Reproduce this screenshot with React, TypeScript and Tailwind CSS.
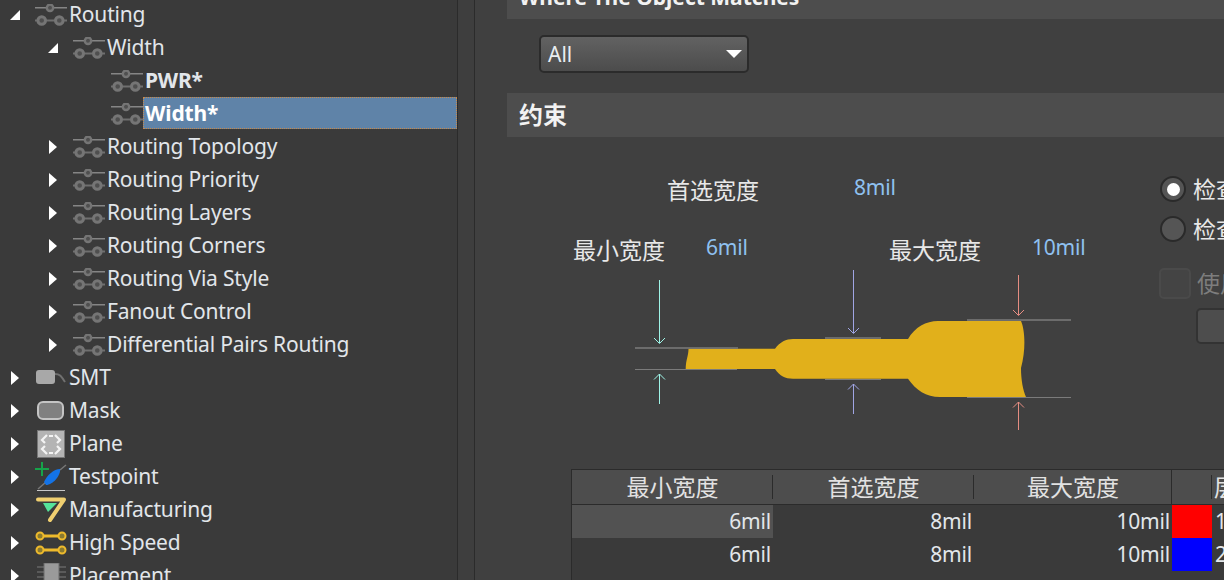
import React from "react";

const FONT = "font-['Noto_Sans','Noto_Sans_CJK_SC',sans-serif]";

const RuleIcon = () => (
  <svg width="32" height="22" viewBox="0 1 32 22" fill="none" stroke="#757575" strokeWidth="1.5">
    <path d="M0 4.800H12M18 4.800H32" stroke="#858585" />
    <path d="M0 17.500H4M10 17.500H21M28 17.500H32" stroke="#6f6f6f" strokeWidth="2" />
    <circle cx="15" cy="4.800" r="3.200" strokeWidth="2.400" fill="#4f4f4f" />
    <circle cx="6.700" cy="17.500" r="3.800" strokeWidth="3" fill="#4f4f4f" />
    <circle cx="24.300" cy="17.500" r="3.800" strokeWidth="3" fill="#4f4f4f" />
  </svg>
);

const SmtIcon = () => (
  <svg width="32" height="22" viewBox="0 0 32 22" fill="none">
    <rect x="1" y="3" width="19" height="14" rx="3" fill="#a8a8a8" />
    <path d="M20 7C25 7 26 9 30 15" stroke="#707070" strokeWidth="2" />
  </svg>
);

const MaskIcon = () => (
  <svg width="32" height="22" viewBox="0 0 32 22" fill="none">
    <rect x="3" y="2" width="25" height="17" rx="5" fill="#808080" stroke="#c4c4c4" strokeWidth="2" />
  </svg>
);

const PlaneIcon = () => (
  <svg width="32" height="28" viewBox="0 0 32 28" fill="none">
    <rect x="2.5" y="0.500" width="27" height="27" fill="#b4b4b4" stroke="#777" />
    <path
      d="M12 5L7 10L10 13M20 5L25 10L22 13M10 16L7 19L12 24M22 16L25 19L20 24M14 6H18M14 23H18"
      stroke="#f4f4f4"
      strokeWidth="2.2"
    />
  </svg>
);

const TestpointIcon = () => (
  <svg width="32" height="30" viewBox="0 0 32 30" fill="none">
    <path d="M0 7H14M7 0V14" stroke="#16a34a" strokeWidth="2" />
    <path d="M2 28.500H30" stroke="#c8c8c8" />
    <path d="M3 27L11 20M25 8L31 3" stroke="#777" strokeWidth="1.5" />
    <path d="M9 20C12 13 19 7 25 7C26 13 18 23 11 23Z" fill="#1473e6" />
  </svg>
);

const ManufacturingIcon = () => (
  <svg width="32" height="28" viewBox="0 0 32 28" fill="none">
    <path d="M8 7H22L13 16Z" fill="#55e39a" />
    <path d="M3 3.500H29L15 24" stroke="#f0cf70" strokeWidth="4" strokeLinejoin="round" strokeLinecap="round" />
  </svg>
);

const HighSpeedIcon = () => (
  <svg width="32" height="26" viewBox="0 0 32 26" fill="none" stroke="#eeba2c" strokeWidth="2">
    <path d="M8 6H24M8 20H24" strokeWidth="3" />
    <circle cx="5" cy="6" r="3.5" fill="#8a7a30" />
    <circle cx="27" cy="6" r="3.5" fill="#8a7a30" />
    <circle cx="5" cy="20" r="3.5" fill="#8a7a30" />
    <circle cx="27" cy="20" r="3.5" fill="#8a7a30" />
  </svg>
);

const PlacementIcon = () => (
  <svg width="32" height="26" viewBox="0 0 32 26" fill="none">
    <rect x="9" y="0" width="15" height="26" fill="#9a9a9a" stroke="#6a6a6a" />
    <path d="M2 4H9M2 9H9M2 14H9M2 19H9M24 4H31M24 9H31M24 14H31M24 19H31" stroke="#7a7a7a" />
  </svg>
);

type Row = {
  label: string;
  level: number;
  arrow?: "open" | "closed";
  icon: React.ReactNode;
  bold?: boolean;
  selected?: boolean;
};

const rows: Row[] = [
  { label: "Routing", level: 0, arrow: "open", icon: <RuleIcon /> },
  { label: "Width", level: 1, arrow: "open", icon: <RuleIcon /> },
  { label: "PWR*", level: 2, icon: <RuleIcon />, bold: true },
  { label: "Width*", level: 2, icon: <RuleIcon />, bold: true, selected: true },
  { label: "Routing Topology", level: 1, arrow: "closed", icon: <RuleIcon /> },
  { label: "Routing Priority", level: 1, arrow: "closed", icon: <RuleIcon /> },
  { label: "Routing Layers", level: 1, arrow: "closed", icon: <RuleIcon /> },
  { label: "Routing Corners", level: 1, arrow: "closed", icon: <RuleIcon /> },
  { label: "Routing Via Style", level: 1, arrow: "closed", icon: <RuleIcon /> },
  { label: "Fanout Control", level: 1, arrow: "closed", icon: <RuleIcon /> },
  { label: "Differential Pairs Routing", level: 1, arrow: "closed", icon: <RuleIcon /> },
  { label: "SMT", level: 0, arrow: "closed", icon: <SmtIcon /> },
  { label: "Mask", level: 0, arrow: "closed", icon: <MaskIcon /> },
  { label: "Plane", level: 0, arrow: "closed", icon: <PlaneIcon /> },
  { label: "Testpoint", level: 0, arrow: "closed", icon: <TestpointIcon /> },
  { label: "Manufacturing", level: 0, arrow: "closed", icon: <ManufacturingIcon /> },
  { label: "High Speed", level: 0, arrow: "closed", icon: <HighSpeedIcon /> },
  { label: "Placement", level: 0, arrow: "closed", icon: <PlacementIcon /> },
];

const levelPad: Record<number, string> = { 0: "pl-0", 1: "pl-[38px]", 2: "pl-[76px]" };

const Arrow = ({ kind }: { kind?: "open" | "closed" }) => (
  <span className="flex w-[35px] shrink-0 justify-center pr-[5px]">
    {kind === "open" && (
      <svg width="10" height="10" viewBox="0 0 10 10">
        <path d="M0 10H10V0Z" fill="#fff" />
      </svg>
    )}
    {kind === "closed" && (
      <svg width="8" height="14" viewBox="0 0 8 14">
        <path d="M0 0L8 7L0 14Z" fill="#fff" />
      </svg>
    )}
  </span>
);

const TreeRow = ({ row }: { row: Row }) => (
  <div className={`flex h-[33px] shrink-0 items-center ${levelPad[row.level]}`}>
    <Arrow kind={row.arrow} />
    <span className="flex w-[32px] shrink-0 justify-center">{row.icon}</span>
    {row.selected ? (
      <span className="mb-[1px] flex h-[32px] flex-1 items-center border border-dotted border-[#c98a4a] bg-[#5f83a8] pl-[1px] text-[21px] leading-none font-bold tracking-[-0.1px] text-white">
        {row.label}
      </span>
    ) : (
      <span
        className={`mb-[1px] ml-[2px] text-[21px] leading-none tracking-[-0.2px] whitespace-nowrap text-[#e2e6ea] ${row.bold ? "font-bold" : ""}`}
      >
        {row.label}
      </span>
    )}
  </div>
);

const TreePanel = () => (
  <div className="flex h-full w-[457px] shrink-0 flex-col overflow-hidden bg-[#3a3a3a]">
    <div className="-mt-[2px] flex flex-col">
      {rows.map((row) => (
        <TreeRow key={row.label} row={row} />
      ))}
    </div>
  </div>
);

const SectionBar = ({ title, className }: { title: string; className?: string }) => (
  <div
    className={`flex h-[44px] shrink-0 items-center bg-[#4d4d4d] pl-[12px] leading-none font-bold whitespace-nowrap text-[#f2f2f2] ${className ?? ""}`}
  >
    {title}
  </div>
);

const WidthDrawing = () => (
  <svg width="470" height="180" viewBox="620 260 470 180" fill="none" className="block">
    <path
      d="M688.5 348.7H775C780 342 786 339 793 339H908C915 327 926 321 938 321H1021C1025 330 1026 350 1021 368C1021 380 1023 390 1026 397H940C926 397 916 390 908 378.7H793C785 378.7 780 376 775 369H685.7C685.7 360 688.5 356 688.5 348.7Z"
      fill="#e1b01b"
    />
    <g stroke="#7b7b7b">
      <path d="M635 348H738" strokeWidth="1.5" />
      <path d="M635 369.5H737" />
      <path d="M825 338H881" strokeWidth="1.5" />
      <path d="M825 379.5H881" />
      <path d="M967 320H1071" strokeWidth="1.5" />
      <path d="M967 397.5H1071" />
    </g>
    <g stroke="#9ff5e8">
      <path d="M659.5 280V343M654 338L659.5 343.5L665 338" />
      <path d="M659.5 404V374M654 379.5L659.5 374L665 379.5" />
    </g>
    <g stroke="#a0a5e4">
      <path d="M853.5 270V333M848 328L853.5 333.5L859 328" />
      <path d="M853.5 414V384M848 389.5L853.5 384L859 389.5" />
    </g>
    <g stroke="#e58d82">
      <path d="M1018.5 275V315M1013 310L1018.5 315.500L1024 310" />
      <path d="M1018.5 430V402M1013 407.500L1018.5 402L1024 407.500" />
    </g>
  </svg>
);

const Diagram = () => (
  <div className="flex w-[653px] shrink-0 flex-col">
    <div className="mt-[38px] flex h-[30px] items-center pl-[160px] whitespace-nowrap">
      <span className="w-[187px] text-[23px] leading-none text-[#e8e8e8]">首选宽度</span>
      <span className="-mt-[5px] text-[21px] leading-none tracking-[-0.2px] text-[#8fc1f0]">8mil</span>
    </div>
    <div className="mt-[30px] flex h-[30px] items-center pl-[66px] whitespace-nowrap">
      <span className="w-[133px] text-[23px] leading-none text-[#e8e8e8]">最小宽度</span>
      <span className="-mt-[5px] w-[183px] text-[21px] leading-none tracking-[-0.2px] text-[#8fc1f0]">6mil</span>
      <span className="w-[143px] text-[23px] leading-none text-[#e8e8e8]">最大宽度</span>
      <span className="-mt-[5px] text-[21px] leading-none tracking-[-0.2px] text-[#8fc1f0]">10mil</span>
    </div>
    <div className="-mt-[5px] ml-[113px]">
      <WidthDrawing />
    </div>
  </div>
);

const Options = () => (
  <div className="flex flex-1 flex-col pt-[32px] whitespace-nowrap">
    <div className="flex h-[40px] items-center">
      <span className="flex h-[26px] w-[26px] items-center justify-center rounded-full border-2 border-[#2a2a2a] bg-[#555]">
        <span className="h-[13px] w-[13px] rounded-full bg-white" />
      </span>
      <span className="ml-[7px] text-[23px] leading-none text-[#e8e8e8]">检查</span>
    </div>
    <div className="flex h-[40px] items-center">
      <span className="h-[26px] w-[26px] rounded-full border-2 border-[#2a2a2a] bg-[#555]" />
      <span className="ml-[7px] text-[23px] leading-none text-[#e8e8e8]">检查</span>
    </div>
    <div className="mt-[18px] -ml-[1px] flex h-[32px] items-center">
      <span className="h-[31px] w-[32px] rounded-[5px] border-2 border-[#4a4a4a] bg-[#444]" />
      <span className="ml-[6px] text-[23px] leading-none text-[#7d7d7d]">使用</span>
    </div>
    <div className="mt-[9px] ml-[36px] h-[36px] w-[120px] rounded-[5px] border-2 border-[#333] bg-[#4d4d4d]" />
  </div>
);

const cols = "grid grid-cols-[201px_201px_198px_40px_1fr]";

const HeaderCell = ({ text, full }: { text: string; full?: boolean }) => (
  <div className="relative flex h-[34px] items-center justify-center text-[23px] leading-none whitespace-nowrap text-[#e2e2e2]">
    {text}
    <span className={`absolute right-0 w-px bg-[#2b2b2b] ${full ? "inset-y-0" : "inset-y-[5px]"}`} />
  </div>
);

const ValueRow = ({ color, layer, active }: { color: string; layer: string; active?: boolean }) => (
  <div className={`${cols} h-[33px] text-[21px] leading-none tracking-[-0.2px] text-[#e2e6ea]`}>
    <div className={`flex items-center justify-end pr-[2px] ${active ? "bg-[#525252]" : ""}`}>6mil</div>
    <div className="flex items-center justify-end pr-[2px]">8mil</div>
    <div className="flex items-center justify-end pr-[2px]">10mil</div>
    <span className={`h-[33px] w-[40px] ${color}`} />
    <div className="flex items-center pl-[3px]">{layer}</div>
  </div>
);

const WidthTable = () => (
  <div className="ml-[64px] flex w-[653px] flex-1 flex-col border-t border-l border-[#2b2b2b] bg-[#3a3a3a]">
    <div className={`${cols} border-b border-[#2b2b2b] bg-[#4d4d4d]`}>
      <HeaderCell text="最小宽度" />
      <HeaderCell text="首选宽度" />
      <HeaderCell text="最大宽度" full />
      <HeaderCell text="" />
      <div className="flex h-[34px] items-center pl-[2px] text-[23px] leading-none whitespace-nowrap text-[#e2e2e2]">
        层
      </div>
    </div>
    <ValueRow color="bg-[#ff0000]" layer="1" active />
    <ValueRow color="bg-[#0000ff]" layer="2" />
  </div>
);

const RulePanel = () => (
  <div className="flex min-w-0 flex-1 flex-col overflow-hidden bg-[#404040] pl-[32px]">
    <SectionBar title="Where The Object Matches" className="-mt-[25px] text-[21px]" />
    <div className="h-[74px] shrink-0 pt-[16px] pl-[32px]">
      <div className="flex h-[38px] w-[210px] items-center justify-between rounded-[5px] border-2 border-[#2b2b2b] bg-gradient-to-b from-[#626262] to-[#4c4c4c] pr-[5px] pl-[7px] text-[21px] leading-none text-[#e8edf2]">
        All
        <svg width="16" height="8" viewBox="0 0 16 8">
          <path d="M0 0H16L8 8Z" fill="#fff" />
        </svg>
      </div>
    </div>
    <SectionBar title="约束" className="text-[24px]" />
    <div className="flex h-[332px] shrink-0">
      <Diagram />
      <Options />
    </div>
    <WidthTable />
  </div>
);

export default function App() {
  return (
    <div className={`flex h-[580px] w-[1224px] overflow-hidden bg-[#404040] ${FONT}`}>
      <TreePanel />
      <div className="h-full w-[18px] shrink-0 border-x border-[#2b2b2b] bg-[#3e3e3e]" />
      <RulePanel />
    </div>
  );
}
